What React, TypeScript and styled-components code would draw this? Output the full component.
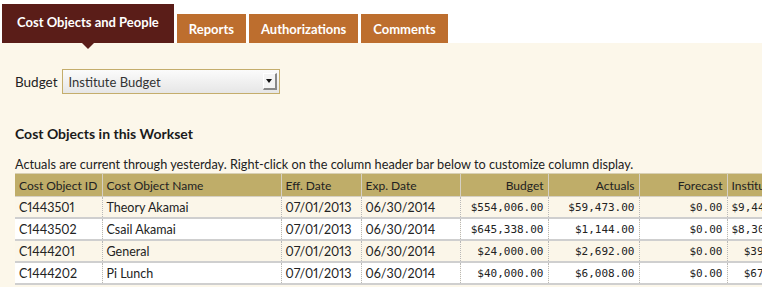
import styled, { createGlobalStyle } from 'styled-components';

const GlobalStyle = createGlobalStyle`
    html, body {
        margin: 0;
        padding: 0;
        background: #ffffff;
        font-family: Lato, "Open Sans", sans-serif;
        color: #222;
    }
`;

const Page = styled.div`
    width: 762px;
    height: 287px;
    overflow: hidden;
`;

const TabBar = styled.div`
    display: flex;
    align-items: flex-end;
    gap: 3px;
    padding: 4px 0 0 2px;
    height: 43px;
    box-sizing: border-box;
`;

const Tab = styled.div<{ $active?: boolean }>`
    position: relative;
    display: flex;
    align-items: center;
    justify-content: center;
    height: ${props => props.$active ? '39px' : '29px'};
    padding: ${props => props.$active ? '0 15px 4px' : '0 12px'};
    box-sizing: border-box;
    background: ${props => props.$active ? '#5a1d18' : '#bd6e2e'};
    color: #ffffff;
    font-weight: 700;
    font-size: 13px;
    white-space: nowrap;

    ${props => props.$active && `
        &::after {
            content: '';
            position: absolute;
            left: 50%;
            bottom: -6px;
            margin-left: -6px;
            border-left: 6px solid transparent;
            border-right: 6px solid transparent;
            border-top: 6px solid #5a1d18;
        }
    `}
`;

const Panel = styled.div`
    background: #fcf7ea;
    padding: 26px 0 0 15px;
    height: 244px;
    box-sizing: border-box;
    overflow: hidden;
`;

const FieldRow = styled.div`
    display: flex;
    align-items: center;
    gap: 4px;
    font-size: 13.5px;
`;

const Select = styled.div`
    width: 218px;
    height: 25px;
    box-sizing: border-box;
    border: 1px solid #c4ad6c;
    background: linear-gradient(180deg, #fbfbfb 0%, #e6e6e6 100%);
    display: flex;
    align-items: center;
    justify-content: space-between;
    padding: 0 2px 0 6px;
    font-size: 13px;
    color: #333;
`;

const SelectButton = styled.div`
    width: 14px;
    height: 17px;
    box-sizing: border-box;
    background: #f4f4f4;
    border-top: 1px solid #ffffff;
    border-left: 1px solid #ffffff;
    border-right: 2px solid #888;
    border-bottom: 2px solid #888;
    display: flex;
    align-items: center;
    justify-content: center;

    &::before {
        content: '';
        border-left: 3px solid transparent;
        border-right: 3px solid transparent;
        border-top: 4px solid #111;
    }
`;

const SectionTitle = styled.h2`
    margin: 31px 0 0;
    font-size: 14px;
    font-weight: 700;
    color: #1a1a1a;
`;

const Note = styled.p`
    margin: 14px 0 0;
    font-size: 12.7px;
    line-height: 16px;
    white-space: nowrap;
`;

const Table = styled.table`
    border-collapse: collapse;
    table-layout: fixed;
    font-size: 12px;
    font-variant-numeric: proportional-nums;
    margin-top: 1px;
`;

const Th = styled.th<{ $right?: boolean }>`
    background: #bfad69;
    font-weight: 400;
    color: #222;
    text-align: ${props => props.$right ? 'right' : 'left'};
    height: 22px;
    padding: 0 4px;
    border-top: 1px solid #d8d0b4;
    border-left: 1px solid #d5d0c4;
    border-bottom: 1px solid #d5d0c4;
    white-space: nowrap;
    overflow: hidden;
    &:first-child { border-left: none; }
`;

const Tr = styled.tr<{ $odd?: boolean }>`
    background: ${props => props.$odd ? '#fbf6e9' : '#ffffff'};
`;

const Td = styled.td<{ $mono?: boolean }>`
    height: 20px;
    padding: 0 4px;
    border-left: 1px dotted #b8b8b8;
    border-bottom: 2px solid #cfcfcf;
    text-align: ${props => props.$mono ? 'right' : 'left'};
    font-family: ${props => props.$mono ? '"DejaVu Sans Mono", monospace' : 'inherit'};
    font-size: ${props => props.$mono ? '11px' : '12.5px'};
    white-space: nowrap;
    overflow: hidden;
    &:first-child { border-left: none; }
`;

const columns = [
    { label: 'Cost Object ID', width: 87 },
    { label: 'Cost Object Name', width: 179 },
    { label: 'Eff. Date', width: 80 },
    { label: 'Exp. Date', width: 99 },
    { label: 'Budget', width: 88, right: true },
    { label: 'Actuals', width: 91, right: true },
    { label: 'Forecast', width: 88, right: true },
    { label: 'Institute', width: 67 },
];

const tableWidth = columns.reduce((sum, c) => sum + c.width, 0);

const rows = [
    ['C1443501', 'Theory Akamai', '07/01/2013', '06/30/2014', '$554,006.00', '$59,473.00', '$0.00', '$9,441.00'],
    ['C1443502', 'Csail Akamai', '07/01/2013', '06/30/2014', '$645,338.00', '$1,144.00', '$0.00', '$8,301.00'],
    ['C1444201', 'General', '07/01/2013', '06/30/2014', '$24,000.00', '$2,692.00', '$0.00', '$397.00'],
    ['C1444202', 'Pi Lunch', '07/01/2013', '06/30/2014', '$40,000.00', '$6,008.00', '$0.00', '$673.00'],
];

export default function App() {
    return (
        <Page>
            <GlobalStyle />
            <TabBar>
                <Tab $active>Cost Objects and People</Tab>
                <Tab>Reports</Tab>
                <Tab>Authorizations</Tab>
                <Tab>Comments</Tab>
            </TabBar>
            <Panel>
                <FieldRow>
                    Budget
                    <Select>
                        Institute Budget
                        <SelectButton />
                    </Select>
                </FieldRow>
                <SectionTitle>Cost Objects in this Workset</SectionTitle>
                <Note>Actuals are current through yesterday. Right-click on the column header bar below to customize column display.</Note>
                <Table style={{ width: tableWidth }}>
                    <colgroup>
                        {columns.map(c => <col key={c.label} style={{ width: c.width }} />)}
                    </colgroup>
                    <thead>
                        <tr>
                            {columns.map(c => <Th key={c.label} $right={c.right}>{c.label}</Th>)}
                        </tr>
                    </thead>
                    <tbody>
                        {rows.map((r, i) => (
                            <Tr key={r[0]} $odd={i % 2 === 0}>
                                {r.map((cell, j) => (
                                    <Td key={j} $mono={j >= 4}>{cell}</Td>
                                ))}
                            </Tr>
                        ))}
                    </tbody>
                </Table>
            </Panel>
        </Page>
    );
}
